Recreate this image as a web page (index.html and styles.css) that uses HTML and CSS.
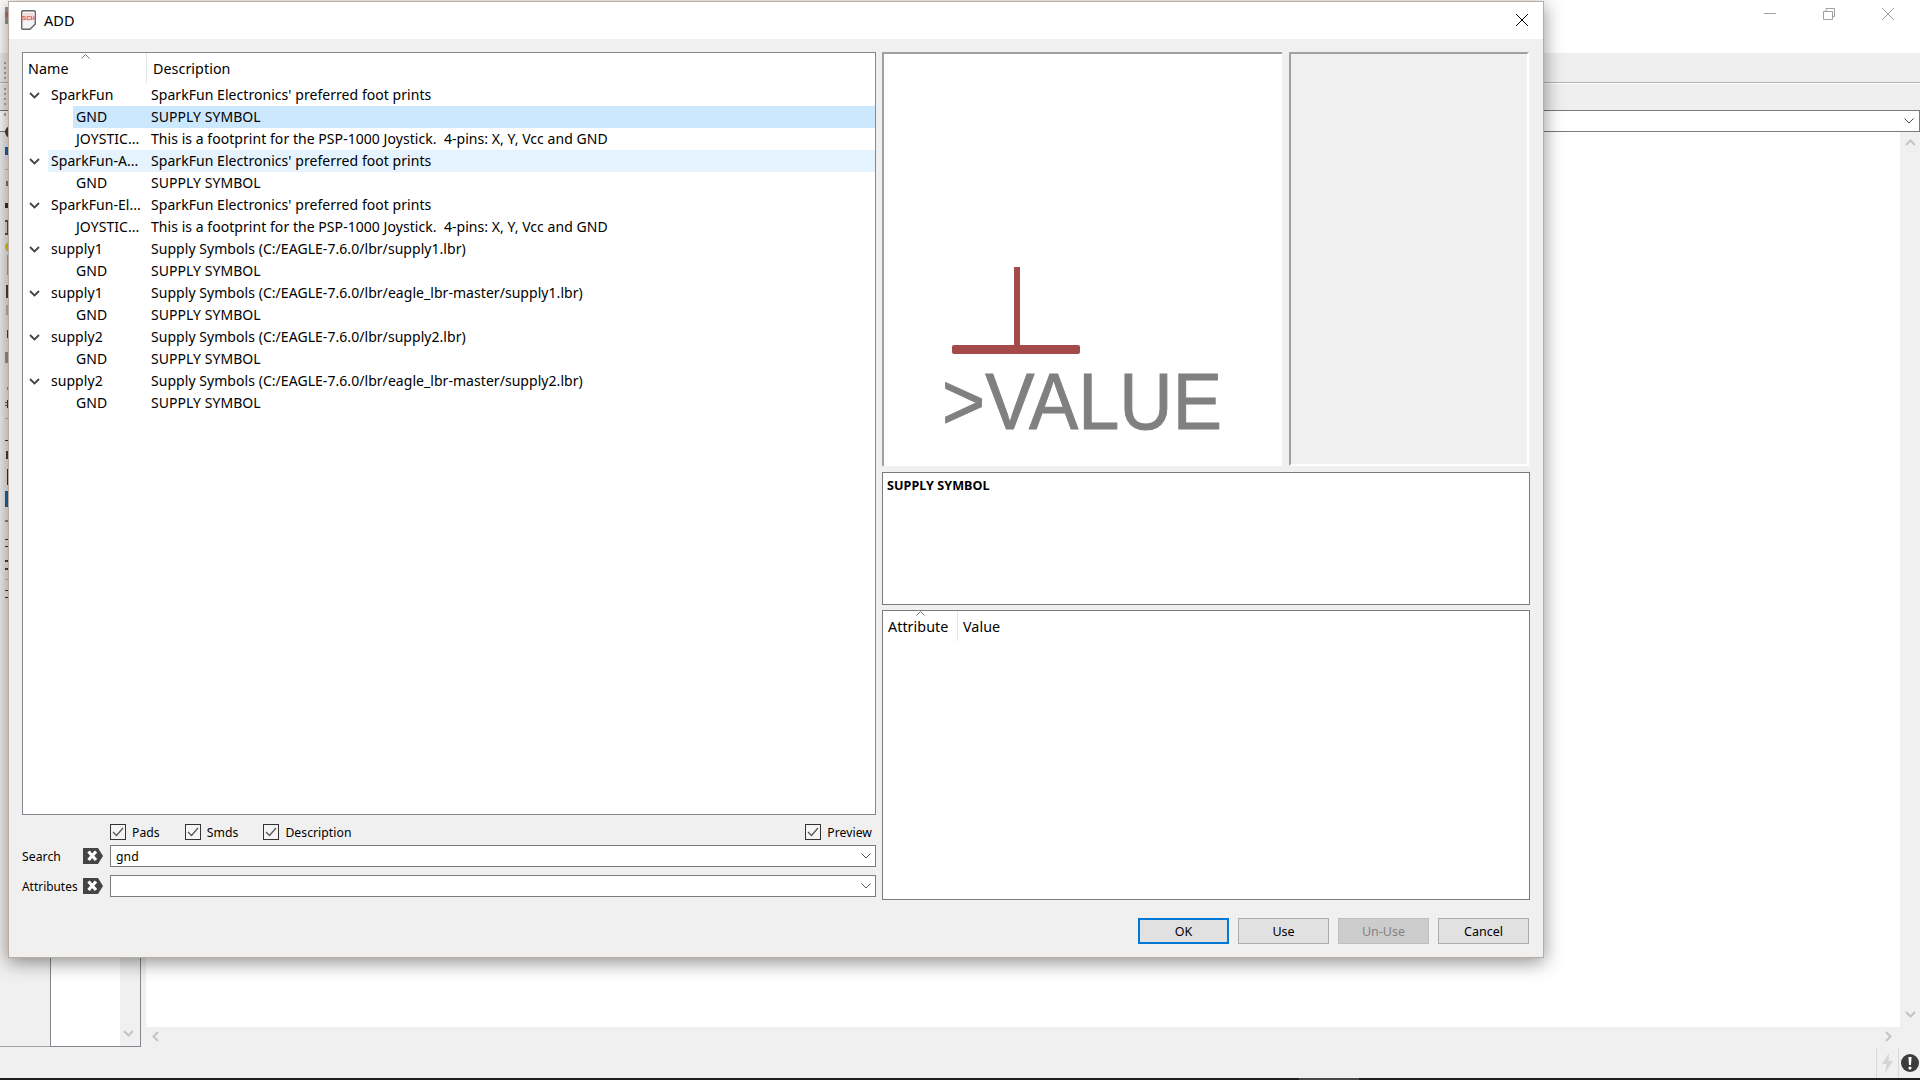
FILE: index.html
```html
<!DOCTYPE html>
<html lang="en">
<head>
<meta charset="UTF-8" />
<title>ADD</title>
<link rel="stylesheet" href="styles.css">
</head>
<body>
<div class="app">
    <div class="app-title">
        <svg class="win-btn" width="12" height="12" viewBox="0 0 12 12"><path d="M0 5.500H12" stroke="#a0a0a0" fill="none"/></svg>
        <svg class="win-btn" width="12" height="12" viewBox="0 0 12 12"><path d="M.5 3.500H9.500V11.500H.5ZM3 3.500V.5H11.500V8.500H9.500" stroke="#a0a0a0" fill="none"/></svg>
        <svg class="win-btn" width="12" height="12" viewBox="0 0 12 12"><path d="M0 0L12 12M12 0L0 12" stroke="#a0a0a0" fill="none"/></svg>
    </div>
    <div class="app-band band-one"></div>
    <div class="app-band band-two"></div>
    <div class="app-combo">
        <svg width="10" height="6" viewBox="0 0 10 6"><path d="M.5 .5L5 5L9.500 .5" stroke="#444" fill="none"/></svg>
    </div>
    <div class="workspace">
        <div class="side">
            <div class="side-tab"></div>
            <div class="side-list">
                <div class="side-scroll">
                    <svg width="11" height="7" viewBox="0 0 11 7"><path d="M1 1L5.500 5.500L10 1" stroke="#c4c4c4" stroke-width="2" fill="none"/></svg>
                </div>
            </div>
        </div>
        <div class="canvas-col">
            <div class="canvas-row">
                <div class="canvas"></div>
                <div class="vscroll">
                    <svg width="11" height="7" viewBox="0 0 11 7"><path d="M1 6L5.500 1.500L10 6" stroke="#c4c4c4" stroke-width="2" fill="none"/></svg>
                    <svg width="11" height="7" viewBox="0 0 11 7"><path d="M1 1L5.500 5.500L10 1" stroke="#c4c4c4" stroke-width="2" fill="none"/></svg>
                </div>
            </div>
            <div class="hscroll">
                <svg width="7" height="11" viewBox="0 0 7 11"><path d="M6 1L1.500 5.500L6 10" stroke="#c4c4c4" stroke-width="2" fill="none"/></svg>
                <svg width="7" height="11" viewBox="0 0 7 11"><path d="M1 1L5.500 5.500L1 10" stroke="#c4c4c4" stroke-width="2" fill="none"/></svg>
            </div>
        </div>
    </div>
    <div class="status">
        <div class="status-cell">
            <svg width="13" height="20" viewBox="0 0 13 20"><path d="M8 0L1 11H5.500L4 20L12 8H7.500Z" fill="#d4d4d4"/></svg>
        </div>
        <div class="status-cell">
            <svg width="18" height="18" viewBox="0 0 18 18"><circle cx="9" cy="9" r="9" fill="#3c3c3c"/><path d="M7.400 3H10.600L10 11H8Z" fill="#fff"/><circle cx="9" cy="14" r="1.600" fill="#fff"/></svg>
        </div>
    </div>
    <div class="taskbar"><div class="task-item"></div></div>
</div>

<!-- bits of the main window toolbar that stick out left of the dialog -->
<svg class="tool-strip" width="8" height="620" viewBox="0 0 8 620">
    <rect x="5" y="7" width="3" height="17" fill="#999"/>
    <rect x="5" y="12" width="3" height="5" fill="#c66"/>
    <rect x="4" y="62" width="2" height="2" fill="#aaa"/>
    <rect x="4" y="67" width="2" height="2" fill="#aaa"/>
    <rect x="4" y="72" width="2" height="2" fill="#aaa"/>
    <rect x="4" y="77" width="2" height="2" fill="#aaa"/>
    <rect x="4" y="88" width="2" height="2" fill="#aaa"/>
    <rect x="4" y="93" width="2" height="2" fill="#aaa"/>
    <rect x="4" y="98" width="2" height="2" fill="#aaa"/>
    <rect x="4" y="103" width="2" height="2" fill="#aaa"/>
    <rect x="4" y="113" width="2" height="3" fill="#aaa"/>
    <circle cx="11" cy="132" r="6" fill="#444"/>
    <rect x="5" y="147" width="3" height="8" fill="#1e64b0"/>
    <rect x="5" y="169" width="3" height="1" fill="#bbb"/>
    <rect x="6" y="181" width="2" height="5" fill="#777"/>
    <rect x="5" y="203" width="3" height="5" fill="#333"/>
    <rect x="5" y="220" width="3" height="15" fill="#555"/>
    <rect x="5" y="222" width="2" height="11" fill="#ddd"/>
    <circle cx="10" cy="247" r="5" fill="#e8c820"/>
    <rect x="7" y="255" width="1" height="20" fill="#aaa"/>
    <rect x="6" y="285" width="2" height="13" fill="#444"/>
    <rect x="6" y="305" width="2" height="10" fill="#bbb"/>
    <rect x="7" y="330" width="1" height="8" fill="#444"/>
    <rect x="5" y="352" width="3" height="11" fill="#999"/>
    <rect x="7" y="387" width="1" height="3" fill="#999"/>
    <rect x="7" y="400" width="1" height="8" fill="#333"/>
    <rect x="5" y="402" width="3" height="1" fill="#555"/>
    <rect x="5" y="405" width="3" height="1" fill="#555"/>
    <rect x="5" y="418" width="3" height="1" fill="#bbb"/>
    <rect x="5" y="440" width="3" height="1" fill="#333"/>
    <rect x="6" y="451" width="2" height="8" fill="#444"/>
    <rect x="7" y="469" width="1" height="16" fill="#333"/>
    <rect x="5" y="491" width="3" height="16" fill="#2465a8"/>
    <rect x="5" y="520" width="3" height="2" fill="#888"/>
    <rect x="5" y="539" width="3" height="1" fill="#333"/>
    <rect x="5" y="546" width="3" height="1" fill="#333"/>
    <rect x="5" y="560" width="3" height="2" fill="#444"/>
    <rect x="5" y="568" width="3" height="2" fill="#444"/>
    <rect x="5" y="579" width="3" height="1" fill="#bbb"/>
    <rect x="5" y="590" width="3" height="1" fill="#333"/>
    <rect x="5" y="597" width="3" height="1" fill="#333"/>
</svg>

<div class="dialog">
    <div class="dialog-title">
        <svg class="dialog-icon" width="15" height="20" viewBox="0 0 15 20">
            <path d="M2 .7H13Q14.300 .7 14.300 2V14L9 19.300H2Q.7 19.300 .7 18V2Q.7 .7 2 .7Z" fill="#f4f4f4" stroke="#666" stroke-width="1.400"/>
            <rect x="1.500" y="3" width="12" height="8" fill="#f3dcdc"/>
            <text x="7.500" y="9.800" class="icon-text">SCH</text>
        </svg>
        <span class="dialog-name">ADD</span>
        <svg class="dialog-close" width="12" height="12" viewBox="0 0 12 12"><path d="M0 0L12 12M12 0L0 12" stroke="#000" fill="none"/></svg>
    </div>
    <div class="dialog-body">
        <div class="left-col">
            <div class="tree">
                <div class="tree-head">
                    <div class="head-name">Name<svg class="sort-mark" width="9" height="5" viewBox="0 0 9 5"><path d="M.5 4.500L4.500 .5L8.500 4.500" stroke="#777" fill="none"/></svg></div>
                    <div class="head-desc">Description</div>
                </div>
                <div class="row row-lib">
                    <svg class="arrow" width="11" height="7" viewBox="0 0 11 7"><path d="M1 1L5.500 5.500L10 1" stroke="#444" stroke-width="1.800" fill="none"/></svg>
                    <div class="row-body"><span class="name">SparkFun</span><span class="desc">SparkFun Electronics' preferred foot prints</span></div>
                </div>
                <div class="row row-part">
                    <div class="row-body selected"><span class="name">GND</span><span class="desc">SUPPLY SYMBOL</span></div>
                </div>
                <div class="row row-part">
                    <div class="row-body"><span class="name">JOYSTIC...</span><span class="desc">This is a footprint for the PSP-1000 Joystick.&nbsp; 4-pins: X, Y, Vcc and GND</span></div>
                </div>
                <div class="row row-lib">
                    <svg class="arrow" width="11" height="7" viewBox="0 0 11 7"><path d="M1 1L5.500 5.500L10 1" stroke="#444" stroke-width="1.800" fill="none"/></svg>
                    <div class="row-body hovered"><span class="name">SparkFun-A...</span><span class="desc">SparkFun Electronics' preferred foot prints</span></div>
                </div>
                <div class="row row-part">
                    <div class="row-body"><span class="name">GND</span><span class="desc">SUPPLY SYMBOL</span></div>
                </div>
                <div class="row row-lib">
                    <svg class="arrow" width="11" height="7" viewBox="0 0 11 7"><path d="M1 1L5.500 5.500L10 1" stroke="#444" stroke-width="1.800" fill="none"/></svg>
                    <div class="row-body"><span class="name">SparkFun-El...</span><span class="desc">SparkFun Electronics' preferred foot prints</span></div>
                </div>
                <div class="row row-part">
                    <div class="row-body"><span class="name">JOYSTIC...</span><span class="desc">This is a footprint for the PSP-1000 Joystick.&nbsp; 4-pins: X, Y, Vcc and GND</span></div>
                </div>
                <div class="row row-lib">
                    <svg class="arrow" width="11" height="7" viewBox="0 0 11 7"><path d="M1 1L5.500 5.500L10 1" stroke="#444" stroke-width="1.800" fill="none"/></svg>
                    <div class="row-body"><span class="name">supply1</span><span class="desc">Supply Symbols (C:/EAGLE-7.6.0/lbr/supply1.lbr)</span></div>
                </div>
                <div class="row row-part">
                    <div class="row-body"><span class="name">GND</span><span class="desc">SUPPLY SYMBOL</span></div>
                </div>
                <div class="row row-lib">
                    <svg class="arrow" width="11" height="7" viewBox="0 0 11 7"><path d="M1 1L5.500 5.500L10 1" stroke="#444" stroke-width="1.800" fill="none"/></svg>
                    <div class="row-body"><span class="name">supply1</span><span class="desc">Supply Symbols (C:/EAGLE-7.6.0/lbr/eagle_lbr-master/supply1.lbr)</span></div>
                </div>
                <div class="row row-part">
                    <div class="row-body"><span class="name">GND</span><span class="desc">SUPPLY SYMBOL</span></div>
                </div>
                <div class="row row-lib">
                    <svg class="arrow" width="11" height="7" viewBox="0 0 11 7"><path d="M1 1L5.500 5.500L10 1" stroke="#444" stroke-width="1.800" fill="none"/></svg>
                    <div class="row-body"><span class="name">supply2</span><span class="desc">Supply Symbols (C:/EAGLE-7.6.0/lbr/supply2.lbr)</span></div>
                </div>
                <div class="row row-part">
                    <div class="row-body"><span class="name">GND</span><span class="desc">SUPPLY SYMBOL</span></div>
                </div>
                <div class="row row-lib">
                    <svg class="arrow" width="11" height="7" viewBox="0 0 11 7"><path d="M1 1L5.500 5.500L10 1" stroke="#444" stroke-width="1.800" fill="none"/></svg>
                    <div class="row-body"><span class="name">supply2</span><span class="desc">Supply Symbols (C:/EAGLE-7.6.0/lbr/eagle_lbr-master/supply2.lbr)</span></div>
                </div>
                <div class="row row-part">
                    <div class="row-body"><span class="name">GND</span><span class="desc">SUPPLY SYMBOL</span></div>
                </div>
            </div>
            <div class="options">
                <div class="check"><span class="check-box"><svg width="12" height="10" viewBox="0 0 12 10"><path d="M1 5L4.500 8.500L11 1" stroke="#555" stroke-width="1.200" fill="none"/></svg></span>Pads</div>
                <div class="check"><span class="check-box"><svg width="12" height="10" viewBox="0 0 12 10"><path d="M1 5L4.500 8.500L11 1" stroke="#555" stroke-width="1.200" fill="none"/></svg></span>Smds</div>
                <div class="check"><span class="check-box"><svg width="12" height="10" viewBox="0 0 12 10"><path d="M1 5L4.500 8.500L11 1" stroke="#555" stroke-width="1.200" fill="none"/></svg></span>Description</div>
                <div class="check check-end"><span class="check-box"><svg width="12" height="10" viewBox="0 0 12 10"><path d="M1 5L4.500 8.500L11 1" stroke="#555" stroke-width="1.200" fill="none"/></svg></span>Preview</div>
            </div>
            <div class="field field-search">
                <span class="field-label">Search</span>
                <svg class="clear-tag" width="20" height="16" viewBox="0 0 20 16"><path d="M0 0H15L20 8L15 16H0Z" fill="#444"/><path d="M5.500 3.500L13 12M13 3.500L5.500 12" stroke="#fff" stroke-width="3.200" fill="none"/></svg>
                <div class="combo">gnd<svg width="10" height="6" viewBox="0 0 10 6"><path d="M.5 .5L5 5L9.500 .5" stroke="#555" fill="none"/></svg></div>
            </div>
            <div class="field">
                <span class="field-label field-label-tight">Attributes</span>
                <svg class="clear-tag" width="20" height="16" viewBox="0 0 20 16"><path d="M0 0H15L20 8L15 16H0Z" fill="#444"/><path d="M5.500 3.500L13 12M13 3.500L5.500 12" stroke="#fff" stroke-width="3.200" fill="none"/></svg>
                <div class="combo"><svg class="combo-end" width="10" height="6" viewBox="0 0 10 6"><path d="M.5 .5L5 5L9.500 .5" stroke="#555" fill="none"/></svg></div>
            </div>
        </div>
        <div class="right-col">
            <div class="previews">
                <div class="pane pane-symbol">
                    <svg class="symbol" width="398" height="412" viewBox="0 0 398 412">
                        <rect x="130" y="213" width="6" height="79" fill="#a44a4a"/>
                        <rect x="68" y="291" width="128" height="9" rx="2" fill="#a44a4a"/>
                        <text x="58" y="375" class="symbol-value" textLength="280" lengthAdjust="spacingAndGlyphs">&gt;VALUE</text>
                    </svg>
                </div>
                <div class="pane pane-package"></div>
            </div>
            <div class="desc-box"><b>SUPPLY SYMBOL</b></div>
            <div class="attr-box">
                <div class="attr-head">
                    <div class="attr-col">Attribute<svg class="attr-sort" width="9" height="5" viewBox="0 0 9 5"><path d="M.5 4.500L4.500 .5L8.500 4.500" stroke="#777" fill="none"/></svg></div>
                    <div class="attr-val">Value</div>
                </div>
            </div>
        </div>
    </div>
    <div class="dialog-foot">
        <button class="btn btn-default">OK</button>
        <button class="btn">Use</button>
        <button class="btn btn-off">Un-Use</button>
        <button class="btn">Cancel</button>
    </div>
</div>
</body>
</html>
```

FILE: styles.css
```css
html, body {
    margin: 0;
    height: 100%;
    overflow: hidden;
}
body {
    position: relative;
    font-family: "Noto Sans", "Open Sans", sans-serif;
    font-size: 14px;
    letter-spacing: 0.05px;
    color: #000;
    background-color: #f0f0f0;
}
svg {
    display: block;
    flex: none;
}

/* main window behind the dialog */
.app {
    width: 1920px;
    height: 1080px;
    display: flex;
    flex-direction: column;
}
.app-title {
    height: 54px;
    background-color: #fff;
    border-bottom: 1px solid #eee;
    display: flex;
    justify-content: flex-end;
    gap: 47px;
    padding: 8px 26px 0 0;
    box-sizing: border-box;
}
.app-band {
    background-color: #efefef;
}
.band-one {
    height: 29px;
    border-bottom: 1px solid #b4b4b4;
    box-sizing: border-box;
}
.band-two {
    height: 27px;
    border-top: 1px solid #fff;
    box-sizing: border-box;
}
.app-combo {
    height: 22px;
    box-sizing: border-box;
    background-color: #fff;
    border: 1px solid #7a7a7a;
    border-width: 1px 1px 1px 0;
    display: flex;
    justify-content: flex-end;
    align-items: center;
    padding-right: 5px;
}
.workspace {
    height: 915px;
    display: flex;
}
.side {
    width: 146px;
    display: flex;
    align-items: flex-end;
}
.side-tab {
    width: 50px;
    height: 100%;
    box-sizing: border-box;
    border-bottom: 1px solid #a0a0a0;
}
.side-list {
    width: 91px;
    height: 100%;
    box-sizing: border-box;
    background-color: #fff;
    border: 1px solid #828790;
    display: flex;
    justify-content: flex-end;
}
.side-scroll {
    width: 20px;
    background-color: #f0f0f0;
    display: flex;
    flex-direction: column;
    justify-content: flex-end;
    align-items: center;
    padding: 0 3px 9px 0;
    box-sizing: border-box;
}
.canvas-col {
    flex: 1;
    display: flex;
    flex-direction: column;
}
.canvas-row {
    height: 895px;
    display: flex;
}
.canvas {
    flex: 1;
    background-color: #fff;
}
.vscroll {
    width: 20px;
    display: flex;
    flex-direction: column;
    justify-content: space-between;
    align-items: center;
    padding: 7px 0 9px;
    box-sizing: border-box;
}
.hscroll {
    height: 20px;
    box-sizing: border-box;
    display: flex;
    justify-content: space-between;
    align-items: center;
    padding: 0 28px 2px 6px;
}
.status {
    height: 31px;
    display: flex;
    justify-content: flex-end;
}
.status-cell {
    width: 21px;
    border-left: 1px solid #d8d8d8;
    display: flex;
    align-items: center;
    justify-content: center;
    margin-top: 1px;
}
.taskbar {
    height: 2px;
    background-color: #1f1f1f;
    padding-left: 1299px;
}
.task-item {
    width: 60px;
    height: 2px;
    background-color: #484848;
}
.tool-strip {
    position: absolute;
    left: 0;
    top: 0;
}

/* ADD dialog */
.dialog {
    position: absolute;
    left: 8px;
    top: 1px;
    width: 1536px;
    height: 957px;
    box-sizing: border-box;
    border: 1px solid #b9aca0;
    background-color: #f0f0f0;
    box-shadow: 0 4px 18px rgba(0,0,0,0.45);
    display: flex;
    flex-direction: column;
}
.dialog-title {
    height: 37px;
    flex: none;
    background-color: #fff;
    display: flex;
    align-items: center;
    padding: 0 15px 1px 12px;
    box-sizing: border-box;
    font-size: 14.500px;
}
.icon-text {
    font-family: "Liberation Sans", sans-serif;
    font-size: 6px;
    font-weight: 700;
    fill: #d84a55;
    text-anchor: middle;
}
.dialog-name {
    margin-left: 8px;
}
.dialog-close {
    margin-left: auto;
}
.dialog-body {
    flex: 1;
    display: flex;
    gap: 6px;
    padding: 13px 13px 0;
    min-height: 0;
}
.left-col {
    width: 854px;
    display: flex;
    flex-direction: column;
    padding-bottom: 3px;
    box-sizing: border-box;
}
.tree {
    flex: 1;
    background-color: #fff;
    border: 1px solid #828790;
}
.tree-head {
    height: 31px;
    display: flex;
    font-size: 14.300px;
}
.head-name {
    width: 118px;
    height: 30px;
    padding-left: 5px;
    position: relative;
    border-right: 1px solid #e5e5e5;
    line-height: 31px;
}
.sort-mark {
    position: absolute;
    left: 58px;
    top: 1px;
}
.head-desc {
    padding-left: 6px;
    line-height: 31px;
}
.row {
    height: 22px;
    display: flex;
    align-items: center;
}
.row-lib {
    padding-left: 6px;
}
.arrow {
    margin-right: 8px;
}
.row-part {
    padding-left: 50px;
}
.row-body {
    flex: 1;
    height: 22px;
    line-height: 22px;
    display: flex;
    white-space: nowrap;
}
.selected {
    background-color: #cce8ff;
}
.hovered {
    background-color: #e5f3ff;
}
.name {
    padding-left: 3px;
    box-sizing: border-box;
}
.row-lib .name {
    width: 103px;
}
.row-part .name {
    width: 78px;
}
.options {
    height: 16px;
    margin-top: 9px;
    padding: 0 4px 0 88px;
    display: flex;
    gap: 25px;
    font-size: 12.200px;
    flex: none;
}
.check {
    display: flex;
    align-items: center;
    gap: 6px;
}
.check-end {
    margin-left: auto;
}
.check-box {
    width: 16px;
    height: 16px;
    box-sizing: border-box;
    border: 1px solid #333;
    background-color: #f5f5f5;
    display: flex;
    align-items: center;
    justify-content: center;
}
.field {
    height: 22px;
    margin-top: 8px;
    display: flex;
    align-items: center;
    font-size: 12.200px;
    flex: none;
}
.field-search {
    margin-top: 5px;
}
.field-label {
    width: 61px;
}
.field-label-tight {
    font-size: 11.800px;
}
.clear-tag {
    margin-right: 7px;
}
.combo {
    flex: 1;
    height: 22px;
    box-sizing: border-box;
    background-color: #fff;
    border: 1px solid #7a7a7a;
    padding: 0 4px 0 5px;
    display: flex;
    align-items: center;
    justify-content: space-between;
}
.combo-end {
    margin-left: auto;
}
.right-col {
    width: 648px;
    display: flex;
    flex-direction: column;
}
.previews {
    height: 414px;
    display: flex;
    gap: 7px;
    flex: none;
}
.pane {
    border-top: 2px solid #a0a0a0;
    border-left: 2px solid #a0a0a0;
    box-sizing: border-box;
}
.pane-symbol {
    width: 400px;
    background-color: #fff;
}
.pane-package {
    flex: 1;
    margin-right: 1px;
    background-color: #f0f0f0;
    border-right: 2px solid #fff;
    border-bottom: 2px solid #fff;
}
.symbol-value {
    font-family: "Liberation Sans", sans-serif;
    font-size: 80px;
    fill: #808080;
    stroke: #808080;
    stroke-width: 1px;
}
.desc-box {
    height: 133px;
    flex: none;
    margin-top: 6px;
    box-sizing: border-box;
    background-color: #fff;
    border: 1px solid #7a7a7a;
    padding: 4px 4px;
    font-size: 12.600px;
}
.attr-box {
    flex: 1;
    margin-top: 5px;
    background-color: #fff;
    border: 1px solid #7a7a7a;
}
.attr-head {
    height: 30px;
    display: flex;
    font-size: 14.300px;
    line-height: 32px;
}
.attr-col {
    width: 69px;
    padding-left: 5px;
    border-right: 1px solid #e5e5e5;
    position: relative;
}
.attr-sort {
    position: absolute;
    left: 33px;
    top: 0;
}
.attr-val {
    padding-left: 5px;
}
.dialog-foot {
    height: 57px;
    flex: none;
    box-sizing: border-box;
    padding: 18px 14px 0 0;
    display: flex;
    justify-content: flex-end;
    gap: 9px;
}
.btn {
    width: 91px;
    height: 26px;
    padding: 0;
    box-sizing: border-box;
    border: 1px solid #adadad;
    background-color: #e1e1e1;
    font-family: inherit;
    font-size: 12.500px;
    color: #000;
}
.btn-default {
    border: 2px solid #0078d7;
}
.btn-off {
    background-color: #cccccc;
    border-color: #bfbfbf;
    color: #838383;
}
```
